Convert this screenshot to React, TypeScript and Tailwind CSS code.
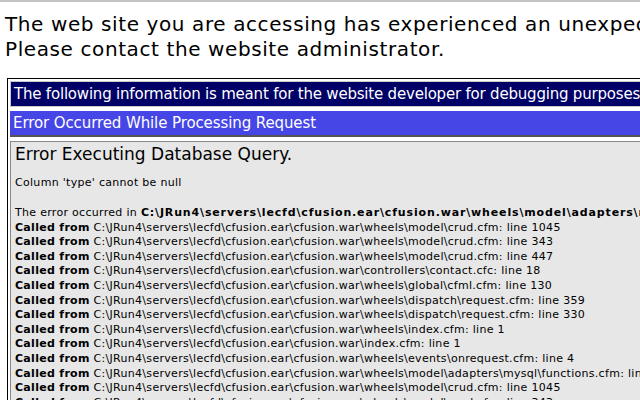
const base = "C:\\JRun4\\servers\\lecfd\\cfusion.ear\\cfusion.war\\";

const calls = [
  "wheels\\model\\crud.cfm: line 1045",
  "wheels\\model\\crud.cfm: line 343",
  "wheels\\model\\crud.cfm: line 447",
  "controllers\\contact.cfc: line 18",
  "wheels\\global\\cfml.cfm: line 130",
  "wheels\\dispatch\\request.cfm: line 359",
  "wheels\\dispatch\\request.cfm: line 330",
  "wheels\\index.cfm: line 1",
  "index.cfm: line 1",
  "wheels\\events\\onrequest.cfm: line 4",
  "wheels\\model\\adapters\\mysql\\functions.cfm: line 79",
  "wheels\\model\\crud.cfm: line 1045",
  "wheels\\model\\crud.cfm: line 343",
];

export default function App() {
  return (
    <div className="h-[400px] overflow-hidden bg-white border-t-2 border-[#c4c4c4] text-black font-['DejaVu_Sans',Verdana,sans-serif]">
      <p className="pl-[5px] pt-[10px] text-[20px] leading-[25px] tracking-[0.6px] whitespace-nowrap">
        The web site you are accessing has experienced an unexpected error.
        <br />
        Please contact the website administrator.
      </p>

      <div className="mt-[16px] ml-[7px] w-[760px] border border-black p-[2px] flex flex-col gap-[4px]">
        <div className="bg-[#000066] text-white text-[15px] leading-[24px] tracking-[-0.2px] px-[3px] whitespace-nowrap border border-[#c8c8c8]">
          The following information is meant for the website developer for debugging purposes.
        </div>
        <div className="bg-[#4646e6] text-white text-[15px] leading-[24px] tracking-[-0.1px] px-[3px] whitespace-nowrap border-b-2 border-[#555]">
          Error Occurred While Processing Request
        </div>
        <div className="bg-[#e7e7e7] border border-[#888] px-[4px] pt-[1px] pb-[20px]">
          <h1 className="text-[17px] leading-[22px]">Error Executing Database Query.</h1>
          <div className="mt-[11px] text-[11px] leading-[14.6px] tracking-[0.3px] whitespace-nowrap">
            <p>Column 'type' cannot be null</p>
            <p className="mt-[15.5px]">
              The error occurred in{" "}
              <b className="tracking-[0.85px]">{base}wheels\model\adapters\mysql\functions.cfm: line 79</b>
            </p>
            {calls.map((c, i) => (
              <p key={i}>
                <b>Called from</b> {base}
                {c}
              </p>
            ))}
          </div>
        </div>
      </div>
    </div>
  );
}
